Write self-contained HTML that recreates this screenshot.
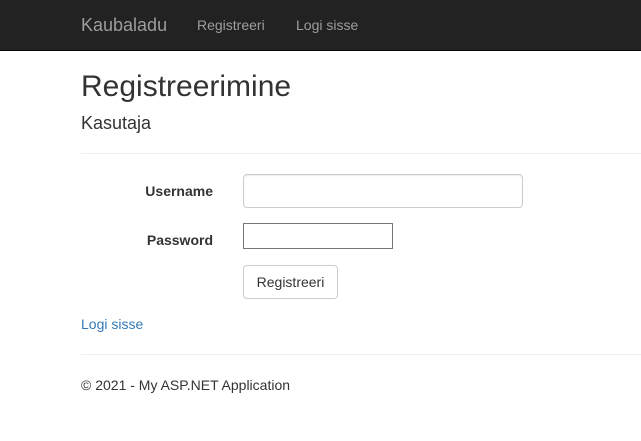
<!DOCTYPE html>
<html><head><meta charset="utf-8"><style>
*{box-sizing:border-box;margin:0;padding:0}
body{width:641px;height:441px;overflow:hidden;background:#fff;font-family:"Liberation Sans",Arial,sans-serif;font-size:14px;color:#333;position:relative}
.nav{position:absolute;left:0;top:0;width:641px;height:51px;background:#222;border-bottom:1px solid #080808}
.a{position:absolute;line-height:20px;white-space:nowrap}
.brand{left:81px;top:15px;font-size:18px;color:#9d9d9d}
.nl{color:#9d9d9d;font-size:14px;top:15px}
h1{position:absolute;left:81px;top:69px;font-size:30px;font-weight:normal;line-height:36px;color:#333}
h4{position:absolute;left:81px;top:113px;font-size:18px;font-weight:normal;line-height:20px;color:#333}
.hr{position:absolute;left:81px;width:560px;height:1px;background:#eee}
.lbl{font-weight:bold;right:428px;text-align:right}
.in1{position:absolute;left:243px;top:174px;width:280px;height:34px;border:1px solid #ccc;border-radius:4px;box-shadow:inset 0 1px 1px rgba(0,0,0,.075)}
.in2{position:absolute;left:243px;top:223px;width:150px;height:26px;border:1px solid #767676}
.btn{position:absolute;left:243px;top:265px;width:95px;height:34px;border:1px solid #ccc;border-radius:4px;text-align:center;line-height:32px;color:#333}
</style></head><body>
<div class="nav">
<div class="a brand">Kaubaladu</div>
<div class="a nl" style="left:197px">Registreeri</div>
<div class="a nl" style="left:296px">Logi sisse</div>
</div>
<h1>Registreerimine</h1>
<h4>Kasutaja</h4>
<div class="hr" style="top:153px"></div>
<div class="a lbl" style="top:181px">Username</div>
<div class="in1"></div>
<div class="a lbl" style="top:230px">Password</div>
<div class="in2"></div>
<div class="btn">Registreeri</div>
<div class="a" style="left:81px;top:314px;color:#337ab7">Logi sisse</div>
<div class="hr" style="top:354px"></div>
<div class="a" style="left:81px;top:375px">© 2021 - My ASP.NET Application</div>
</body></html>
